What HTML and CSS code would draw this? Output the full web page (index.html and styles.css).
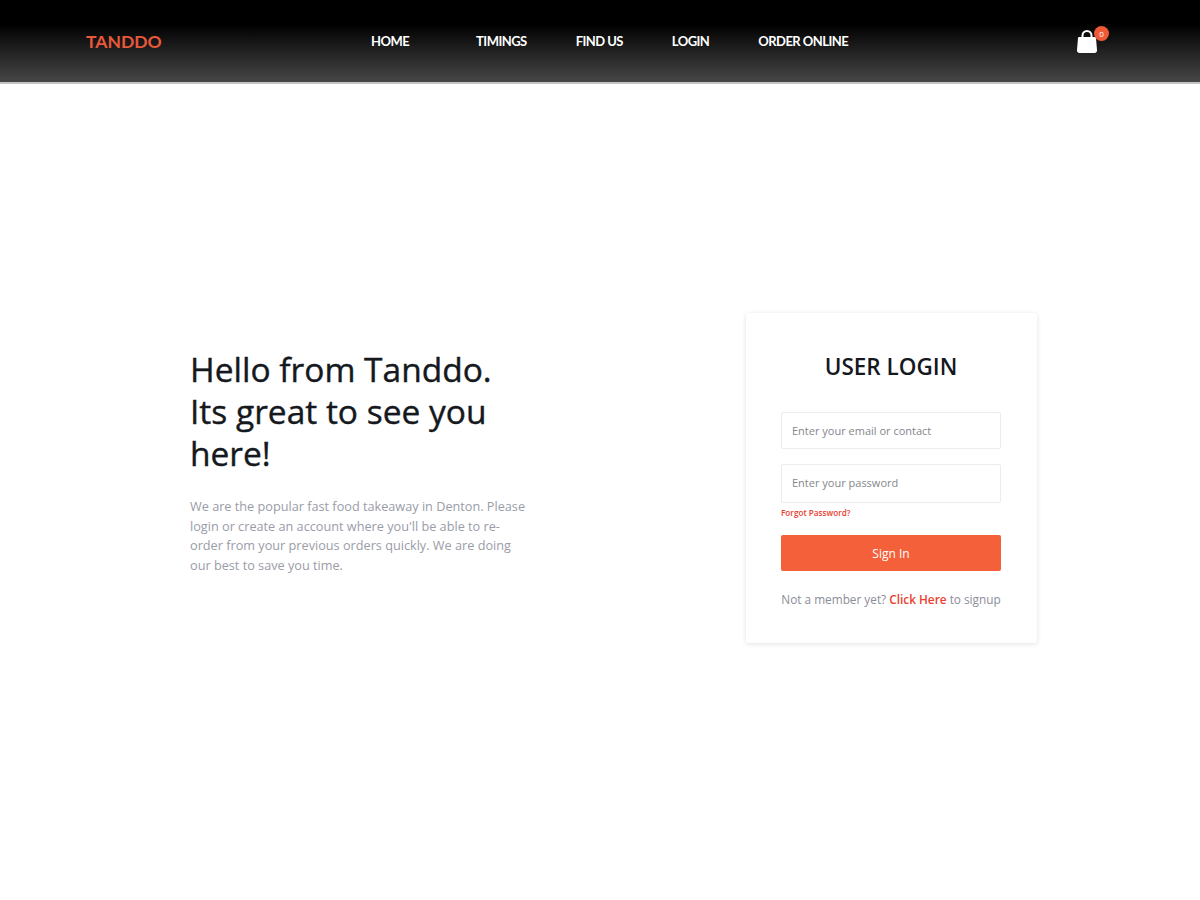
FILE: index.html
```html
<!DOCTYPE html>
<html lang="en">

<head>
    <meta charset="UTF-8">
    <meta name="viewport" content="width=device-width, initial-scale=1.0">
    <title>Tanddo - User Login</title>
    <link rel="stylesheet" href="styles.css">
</head>

<body>
    <header class="site-header">
        <a class="logo" href="#">TANDDO</a>
        <nav class="main-nav">
            <a class="nav-link nav-home" href="#">HOME</a>
            <a class="nav-link" href="#">TIMINGS</a>
            <a class="nav-link" href="#">FIND US</a>
            <a class="nav-link" href="#">LOGIN</a>
            <a class="nav-link" href="#">ORDER ONLINE</a>
        </nav>
        <a class="cart" href="#">
            <svg class="cart-icon" viewBox="0 0 22 24" aria-hidden="true">
                <path d="M6.500 10V6.500a4.500 4.500 0 0 1 9 0V10" fill="none" stroke="#fff" stroke-width="2" />
                <path d="M3 8h16a1 1 0 0 1 1 1l1 12a2.500 2.500 0 0 1-2.500 3h-15A2.500 2.500 0 0 1 1 21L2 9a1 1 0 0 1 1-1z" fill="#fff" />
            </svg>
            <span class="cart-badge">0</span>
        </a>
    </header>

    <main class="login-page">
        <section class="intro">
            <h1 class="intro-title">Hello from Tanddo. Its great to see you here!</h1>
            <p class="intro-text">We are the popular fast food takeaway in Denton. Please login or create an account where you'll be able to re-order from your previous orders quickly. We are doing our best to save you time.</p>
        </section>

        <section class="login-card">
            <h2 class="login-title">USER LOGIN</h2>
            <form class="login-form">
                <input class="login-input input-email" type="text" placeholder="Enter your email or contact">
                <input class="login-input input-password" type="password" placeholder="Enter your password">
                <a class="forgot-link" href="#">Forgot Password?</a>
                <button class="signin-btn" type="button">Sign In</button>
            </form>
            <p class="signup-text">Not a member yet? <a class="signup-link" href="#">Click Here</a> to signup</p>
        </section>
    </main>
</body>

</html>
```

FILE: styles.css
```css
* {
    box-sizing: border-box;
}

body {
    margin: 0;
    background-color: #fff;
    font-family: "Open Sans", "Noto Sans", sans-serif;
}

a {
    text-decoration: none;
}

/* header */
.site-header {
    display: flex;
    align-items: center;
    height: 84px;
    padding: 0 102px 0 86px;
    background: linear-gradient(to bottom, #000 0, #000 24px, #474747 82px);
    border-bottom: 2px solid #c4c4c4;
}

.logo {
    width: 285px;
    color: #e8583a;
    font-family: Lato, sans-serif;
    font-size: 17.500px;
    font-weight: 700;
}

.main-nav {
    display: flex;
    gap: 49px;
}

.nav-link {
    color: #fff;
    font-family: Lato, sans-serif;
    font-size: 13px;
    font-weight: 700;
    letter-spacing: -0.550px;
    white-space: nowrap;
}

.nav-home {
    margin-right: 18px;
}

.cart {
    position: relative;
    display: block;
    width: 22px;
    height: 24px;
    margin-left: auto;
}

.cart-icon {
    display: block;
    width: 22px;
    height: 24px;
}

.cart-badge {
    position: absolute;
    top: -3px;
    right: -11px;
    width: 15px;
    height: 15px;
    border-radius: 50%;
    background-color: #ee5a36;
    color: #fff;
    font-size: 8px;
    line-height: 15px;
    text-align: center;
}

/* login area */
.login-page {
    display: flex;
    align-items: flex-start;
    min-height: 816px;
    padding: 229px 0 0 190px;
}

.intro {
    width: 340px;
    padding-top: 35px;
}

.intro-title {
    margin: 0;
    max-width: 320px;
    color: #15191e;
    font-size: 33.500px;
    font-weight: 400;
    line-height: 42px;
    -webkit-text-stroke: 0.4px #15191e;
}

.intro-text {
    margin: 23px 0 0;
    color: #9a9ca8;
    font-size: 12.700px;
    line-height: 19.700px;
}

.login-card {
    width: 291px;
    height: 330px;
    margin-left: 216px;
    padding: 39px 36px 0 35px;
    border-radius: 3px;
    background-color: #fff;
    box-shadow: 0 1px 5px rgba(0, 0, 0, 0.12);
}

.login-title {
    margin: 0;
    color: #15191e;
    font-size: 22.500px;
    font-weight: 600;
    line-height: 30px;
    text-align: center;
}

.login-form {
    display: flex;
    flex-direction: column;
    margin-top: 30px;
}

.login-input {
    width: 100%;
    padding: 0 10px;
    border: 1px solid #ececec;
    border-radius: 2px;
    outline: none;
    color: #555;
    font-family: inherit;
    font-size: 11px;
}

.login-input::placeholder {
    color: #84868c;
    opacity: 1;
}

.input-email {
    height: 37px;
}

.input-password {
    height: 39px;
    margin-top: 15px;
    padding-bottom: 2px;
}

.forgot-link {
    margin-top: 4px;
    color: #e9402f;
    font-size: 8.200px;
    font-weight: 600;
    line-height: 12px;
}

.signin-btn {
    height: 36px;
    margin-top: 16px;
    border: 0;
    border-radius: 2px;
    background-color: #f4603a;
    color: #fff;
    font-family: inherit;
    font-size: 12px;
    cursor: pointer;
}

.signup-text {
    margin: 19px 0 0;
    color: #8b8d98;
    font-size: 11.800px;
    line-height: 18px;
    text-align: center;
    white-space: nowrap;
}

.signup-link {
    color: #e9402f;
    font-weight: 600;
}
```
